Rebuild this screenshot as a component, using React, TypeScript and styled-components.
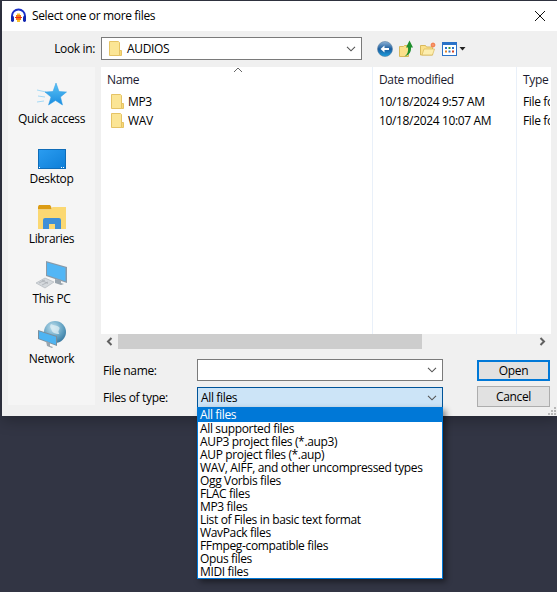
import React from "react";
import styled, { createGlobalStyle } from "styled-components";

const Global = createGlobalStyle`
  html, body { margin: 0; padding: 0; width: 557px; height: 592px; overflow: hidden; background: #323544; }
  #root { width: 557px; height: 592px; }
  * { box-sizing: border-box; }
`;

const Page = styled.div`
  position: relative;
  width: 557px;
  height: 592px;
  padding: 1px 0 0 2px;
  background: #323544;
  font-family: "Open Sans", "Noto Sans", "Liberation Sans", sans-serif;
  font-size: 12px;
  letter-spacing: -0.35px;
  color: #000;
  overflow: hidden;
`;

const Dialog = styled.div`
  position: relative;
  width: 556px;
  height: 415px;
  display: flex;
  flex-direction: column;
  background: #f0f0f0;
  box-shadow: 0 4px 14px rgba(0, 0, 0, 0.28);
`;

const TitleBar = styled.div`
  height: 30px;
  flex: none;
  display: flex;
  align-items: center;
  padding: 0 12px 0 8px;
  background: #fff;
`;
const TitleText = styled.span`
  margin-left: 5px;
  flex: 1;
  line-height: 30px;
`;

const Toolbar = styled.div`
  height: 36px;
  flex: none;
  display: flex;
  align-items: center;
  padding-bottom: 1px;
`;
const LookLabel = styled.label`
  width: 93px;
  padding-right: 0;
  text-align: right;
`;
const LookCombo = styled.div`
  margin-left: 6px;
  width: 261px;
  height: 23px;
  display: flex;
  align-items: center;
  padding-left: 7px;
  background: #fff;
  border: 1px solid #7a7a7a;
  gap: 5px;
`;
const ComboText = styled.span`
  flex: 1;
`;
const ToolIcons = styled.div`
  margin-left: 15px;
  display: flex;
  align-items: center;
  gap: 6px;
`;

const Main = styled.div`
  flex: 1;
  display: flex;
  min-height: 0;
`;

const Sidebar = styled.nav`
  margin-left: 6px;
  width: 87px;
  height: 338px;
  flex: none;
  display: flex;
  flex-direction: column;
  padding-top: 5px;
  background: #f5f5f5;
`;
const Place = styled.div`
  height: 60px;
  flex: none;
  display: flex;
  flex-direction: column;
  align-items: center;
  justify-content: flex-end;
  padding-bottom: 5px;
`;
const PlaceIcon = styled.div`
  height: 32px;
  display: flex;
  align-items: flex-end;
  justify-content: center;
  margin-bottom: 2px;
`;
const PlaceLabel = styled.span`
  line-height: 16px;
`;

const Right = styled.div`
  margin-left: 6px;
  width: 450px;
  display: flex;
  flex-direction: column;
`;

const FilePane = styled.div`
  height: 282px;
  flex: none;
  display: flex;
  flex-direction: column;
  background: #fff;
`;
const Columns = styled.div`
  flex: 1;
  display: grid;
  grid-template-columns: 272px 144px 34px;
  overflow: hidden;
`;
const Column = styled.div`
  position: relative;
  border-right: 1px solid ${p => (p.$last ? "transparent" : "#e9f0f9")};
  overflow: hidden;
  min-width: 0;
`;
const Header = styled.div`
  height: 25px;
  display: flex;
  align-items: center;
  padding-left: 6px;
  white-space: nowrap;
  color: #1a1a2e;
  border-right: 1px solid ${p => (p.$last ? "transparent" : "#e5e5e5")};
  margin-right: -1px;
`;
const SortCaret = styled.svg`
  position: absolute;
  left: 132px;
  top: 0;
`;
const Row = styled.div`
  height: 19px;
  display: flex;
  align-items: center;
  gap: 4px;
  padding-left: ${p => p.$pad}px;
  white-space: nowrap;
`;

const HScroll = styled.div`
  height: 15px;
  flex: none;
  display: flex;
  align-items: center;
  background: #f0f0f0;
`;
const Arrow = styled.div`
  width: 17px;
  display: flex;
  justify-content: center;
  flex: none;
`;
const Thumb = styled.div`
  width: 304px;
  height: 15px;
  background: #cdcdcd;
  flex: none;
`;
const Track = styled.div`
  flex: 1;
`;

const Form = styled.div`
  flex: 1;
  display: flex;
  padding: 10px 0 0 2px;
`;
const Fields = styled.div`
  width: 340px;
  flex: none;
  display: grid;
  grid-template-columns: 94px 246px;
  grid-template-rows: 22px 21px;
  row-gap: 6px;
  align-items: center;
`;
const FieldLabel = styled.label`
  white-space: nowrap;
`;
const Box = styled.div`
  height: 100%;
  display: flex;
  align-items: center;
  justify-content: space-between;
  padding: 0 5px 0 3px;
  background: ${p => (p.$active ? "#cce4f7" : "#fff")};
  border: 1px solid ${p => (p.$active ? "#005499" : "#7a7a7a")};
`;
const Buttons = styled.div`
  margin-left: 34px;
  padding-top: 1px;
  width: 73px;
  display: flex;
  flex-direction: column;
  gap: 5px;
`;
const Button = styled.button`
  height: 21px;
  padding: 0;
  font: inherit;
  letter-spacing: inherit;
  color: #000;
  background: #e1e1e1;
  border: ${p => (p.$primary ? "2px solid #0078d7" : "1px solid #adadad")};
  border-radius: 0;
`;

const Grip = styled.svg`
  position: absolute;
  right: 1px;
  bottom: 1px;
`;

const Dropdown = styled.ul`
  position: absolute;
  left: 197px;
  top: 407px;
  width: 246px;
  margin: 0;
  padding: 0;
  list-style: none;
  background: #fff;
  border: 1px solid #0078d7;
  box-shadow: 3px 3px 6px rgba(0, 0, 0, 0.45);
`;
const Option = styled.li`
  height: ${p => (p.$selected ? 14 : 13)}px;
  line-height: 13px;
  padding-left: 2px;
  white-space: nowrap;
  color: ${p => (p.$selected ? "#fff" : "#000")};
  background: ${p => (p.$selected ? "#0078d7" : "transparent")};
`;

const Chevron = () => (
  <svg width="10" height="6" viewBox="0 0 10 6" fill="none" stroke="#555" strokeWidth="1.1">
    <path d="M1 .8 5 4.8 9 .8" />
  </svg>
);

const Folder = () => (
  <svg width="13" height="16" viewBox="0 0 13 16">
    <path d="M.5.5h9l1 1v13H.5z" fill="#fbe595" stroke="#e5c365" />
    <path d="M10.5 9.5h2v5h-2z" fill="#f8d976" stroke="#e5c365" />
  </svg>
);

const AppLogo = () => (
  <svg width="17" height="16" viewBox="0 0 17 16">
    <path d="M2 10V8a6.500 6.500 0 0 1 13 0v2" fill="none" stroke="#1a2fc8" strokeWidth="2" />
    <rect x="1" y="8" width="3" height="6" rx="1.400" fill="#1226b0" />
    <rect x="13" y="8" width="3" height="6" rx="1.400" fill="#1226b0" />
    <path d="M5 9h7v1H5z" fill="#e8261c" />
    <path d="M6 7h5v2H6zM6 10h5v2H6z" fill="#f57a14" />
    <path d="M7 5.500h3V7H7zM7 12h3v2H7z" fill="#fbc02d" />
  </svg>
);

const BackIcon = () => (
  <svg width="16" height="16" viewBox="0 0 16 16">
    <defs>
      <linearGradient id="bk" x1="0" y1="0" x2="0" y2="1">
        <stop offset="0" stopColor="#8fb3d6" />
        <stop offset=".5" stopColor="#1a5c9e" />
        <stop offset="1" stopColor="#1ca0e0" />
      </linearGradient>
    </defs>
    <circle cx="8" cy="8" r="7.500" fill="url(#bk)" stroke="#5b7f9f" strokeWidth=".6" />
    <path d="M3.500 8 7.500 4.500V7H12v2H7.500v2.500z" fill="#fff" />
  </svg>
);

const UpIcon = () => (
  <svg width="15" height="17" viewBox="0 0 15 17">
    <path d="M.5 6.500h4l1-1h4v11h-9z" fill="#fbe08a" stroke="#d9b95c" />
    <path d="M5.500 16.500c3-2 4-5 3.500-9H7L10.500.5 14 7.500h-2c.3 4-1.500 7.500-6.500 9z" fill="#1f8f2d" />
  </svg>
);

const NewFolderIcon = () => (
  <svg width="16" height="14" viewBox="0 0 16 14">
    <path d="M.5 3.500h5l1 1.500h6v8H.500z" fill="#fbe08a" stroke="#d9b95c" />
    <path d="M2 13 4 7h10.500l-2 6z" fill="#fdeeb0" stroke="#d9b95c" strokeWidth=".7" />
    <circle cx="13" cy="3" r="2.200" fill="#f0652a" />
    <path d="M13 0v6M10 3h6" stroke="#f9b090" strokeWidth=".8" />
  </svg>
);

const ViewIcon = () => (
  <svg width="24" height="14" viewBox="0 0 24 14">
    <rect x=".5" y=".5" width="14" height="13" fill="#fff" stroke="#2a72c8" />
    <rect x="1" y="1" width="13" height="2" fill="#2a72c8" />
    <path d="M3 5h2v2H3z" fill="#2a72c8" />
    <path d="M6.500 5h2v2h-2z" fill="#3a9a3a" />
    <path d="M10 5h2v2h-2z" fill="#2a72c8" />
    <path d="M3 8.500h2v2H3z" fill="#e0852a" />
    <path d="M6.500 8.500h2v2h-2z" fill="#2a72c8" />
    <path d="M10 8.500h2v2h-2z" fill="#d0452a" />
    <path d="M17.500 5h6l-3 3.500z" fill="#222" />
  </svg>
);

const StarIcon = () => (
  <svg width="30" height="27" viewBox="0 0 30 27">
    <defs>
      <linearGradient id="st" x1="0" y1="0" x2="0" y2="1">
        <stop offset="0" stopColor="#5cc4f5" />
        <stop offset="1" stopColor="#1a8ce0" />
      </linearGradient>
    </defs>
    <path d="M0 8l9 2M1 14l7 1M0 20l7-1" stroke="#a5d9f5" strokeWidth="1" />
    <path d="M19 1l3 8.500 7.500.5-6 5 2 8-7-4.500-7 4.500 2.500-8-6-5 8-.5z" fill="url(#st)" stroke="#2a9ae5" strokeWidth=".5" />
  </svg>
);

const DesktopIcon = () => (
  <svg width="28" height="20" viewBox="0 0 28 20">
    <defs>
      <linearGradient id="dk" x1="0" y1="0" x2="1" y2="1">
        <stop offset="0" stopColor="#2a9cf0" />
        <stop offset="1" stopColor="#0f7fd8" />
      </linearGradient>
    </defs>
    <rect width="28" height="20" fill="#0f6cb8" />
    <rect x="1" y="1" width="26" height="18" fill="url(#dk)" />
    <path d="M1 18.500h1M23 18.500h4" stroke="#fff" strokeDasharray="1 1" />
  </svg>
);

const LibrariesIcon = () => (
  <svg width="28" height="24" viewBox="0 0 28 24">
    <path d="M0 1.500 1 0h11l1 1.500 1 3H0z" fill="#dc9c14" />
    <path d="M0 4.500h13L14.500 2H28v22H0z" fill="#fbd872" />
    <path d="M5 24V15a2 2 0 0 1 2-2h14a2 2 0 0 1 2 2v9h-6v-5h-6v5z" fill="#3f8fd6" />
  </svg>
);

const PcIcon = () => (
  <svg width="31" height="28" viewBox="0 0 31 28">
    <path d="M10 0l21 6v16L10 15z" fill="#8a9aa8" />
    <path d="M11 1.500l18.500 5.300v13.500L11 14z" fill="#52b6f5" />
    <path d="M19 18v4l6 2 3-1-3-1v-3z" fill="#9aa5ae" />
    <path d="M0 22l9-5 9 4-9 6z" fill="#d4d8dc" stroke="#aab0b6" strokeWidth=".6" />
    <path d="M3 22l6-3M6 24l6-3M6 19.500l6 3" stroke="#9aa0a6" strokeWidth=".6" />
  </svg>
);

const NetworkIcon = () => (
  <svg width="28" height="28" viewBox="0 0 28 28">
    <defs>
      <radialGradient id="gl" cx=".4" cy=".3" r=".8">
        <stop offset="0" stopColor="#bfe0ee" />
        <stop offset=".6" stopColor="#5f9fc0" />
        <stop offset="1" stopColor="#2f6f98" />
      </radialGradient>
    </defs>
    <circle cx="17" cy="11" r="11" fill="url(#gl)" />
    <path d="M13 3c3 2 6 1 8 3s-2 4 0 6-6 1-7-2-3-4-1-7z" fill="#e5f2f7" opacity=".7" />
    <path d="M0 9l19 6v10L0 18z" fill="#7a8e9c" />
    <path d="M1 10.300l17 5.400v8L1 17.500z" fill="#4eb4f2" />
    <path d="M8 20l1 5 5 2 1-1-3-1v-3z" fill="#9aa5ae" />
  </svg>
);

const Close = () => (
  <svg width="12" height="12" viewBox="0 0 12 12" stroke="#111" strokeWidth="1" fill="none">
    <path d="M1 1l10 10M11 1 1 11" />
  </svg>
);

const places = [
  { label: "Quick access", icon: <StarIcon /> },
  { label: "Desktop", icon: <DesktopIcon /> },
  { label: "Libraries", icon: <LibrariesIcon /> },
  { label: "This PC", icon: <PcIcon /> },
  { label: "Network", icon: <NetworkIcon /> },
];

const options = [
  "All files",
  "All supported files",
  "AUP3 project files (*.aup3)",
  "AUP project files (*.aup)",
  "WAV, AIFF, and other uncompressed types",
  "Ogg Vorbis files",
  "FLAC files",
  "MP3 files",
  "List of Files in basic text format",
  "WavPack files",
  "FFmpeg-compatible files",
  "Opus files",
  "MIDI files",
];

export default function App() {
  return (
    <Page>
      <Global />
      <Dialog>
        <TitleBar>
          <AppLogo />
          <TitleText>Select one or more files</TitleText>
          <Close />
        </TitleBar>
        <Toolbar>
          <LookLabel>Look in:</LookLabel>
          <LookCombo>
            <Folder />
            <ComboText>AUDIOS</ComboText>
            <Box as="span" style={{ border: 0, background: "transparent" }}>
              <Chevron />
            </Box>
          </LookCombo>
          <ToolIcons>
            <BackIcon />
            <UpIcon />
            <NewFolderIcon />
            <ViewIcon />
          </ToolIcons>
        </Toolbar>
        <Main>
          <Sidebar>
            {places.map(p => (
              <Place key={p.label}>
                <PlaceIcon>{p.icon}</PlaceIcon>
                <PlaceLabel>{p.label}</PlaceLabel>
              </Place>
            ))}
          </Sidebar>
          <Right>
            <FilePane>
              <Columns>
                <Column>
                  <SortCaret width="10" height="6" viewBox="0 0 10 6" fill="none" stroke="#666">
                    <path d="M1 5l4-4 4 4" />
                  </SortCaret>
                  <Header>Name</Header>
                  <Row $pad={10}><Folder />MP3</Row>
                  <Row $pad={10}><Folder />WAV</Row>
                </Column>
                <Column>
                  <Header>Date modified</Header>
                  <Row $pad={6}>10/18/2024 9:57 AM</Row>
                  <Row $pad={6}>10/18/2024 10:07 AM</Row>
                </Column>
                <Column $last>
                  <Header $last>Type</Header>
                  <Row $pad={6}>File folder</Row>
                  <Row $pad={6}>File folder</Row>
                </Column>
              </Columns>
              <HScroll>
                <Arrow>
                  <svg width="7" height="9" viewBox="0 0 7 9" fill="none" stroke="#606060" strokeWidth="2">
                    <path d="M5.500 1 2 4.500 5.500 8" />
                  </svg>
                </Arrow>
                <Thumb />
                <Track />
                <Arrow>
                  <svg width="7" height="9" viewBox="0 0 7 9" fill="none" stroke="#606060" strokeWidth="2">
                    <path d="M1.500 1 5 4.500 1.500 8" />
                  </svg>
                </Arrow>
              </HScroll>
            </FilePane>
            <Form>
              <Fields>
                <FieldLabel>File name:</FieldLabel>
                <Box><span /><Chevron /></Box>
                <FieldLabel>Files of type:</FieldLabel>
                <Box $active><span>All files</span><Chevron /></Box>
              </Fields>
              <Buttons>
                <Button $primary>Open</Button>
                <Button>Cancel</Button>
              </Buttons>
            </Form>
          </Right>
        </Main>
        <Grip width="9" height="8" viewBox="0 0 9 8" fill="#b8b8b8">
          <path d="M6 0h2v2H6zM3 3h2v2H3zM6 3h2v2H6zM0 6h2v2H0zM3 6h2v2H3zM6 6h2v2H6z" />
        </Grip>
      </Dialog>
      <Dropdown>
        {options.map((o, i) => (
          <Option key={o} $selected={i === 0}>{o}</Option>
        ))}
      </Dropdown>
    </Page>
  );
}
